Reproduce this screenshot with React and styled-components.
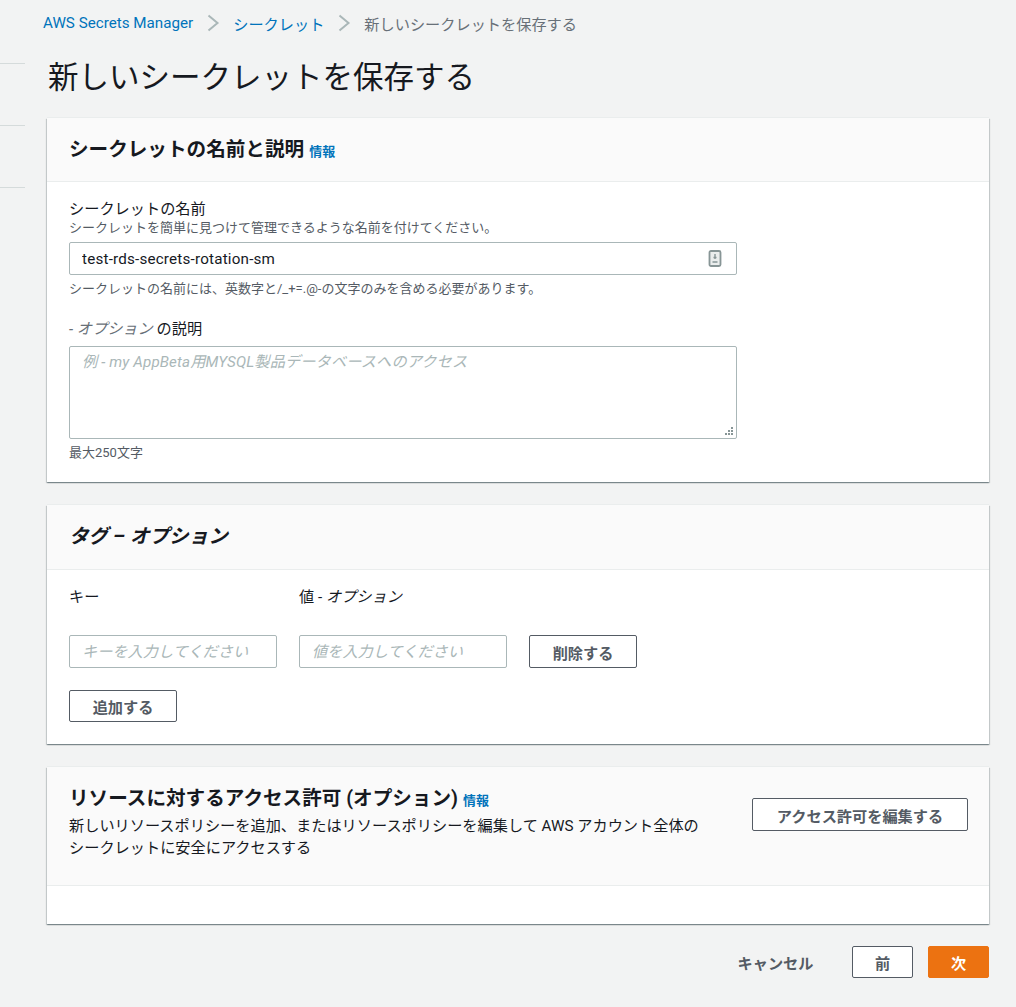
import React from 'react';
import styled, { createGlobalStyle } from 'styled-components';

const FONT = 'Roboto, "Noto Sans CJK JP", sans-serif';

const GlobalStyle = createGlobalStyle`
  html, body {
    margin: 0;
    padding: 0;
    background: #f2f3f3;
  }
  body {
    font-family: ${FONT};
    color: #16191f;
  }
  * {
    box-sizing: border-box;
  }
`;

const Page = styled.div`
  display: flex;
  height: 1007px;
  overflow: hidden;
`;

const SideNav = styled.div`
  width: 25px;
  flex: none;
  padding-top: 63px;
`;

const SideDivider = styled.div`
  height: 62px;
  border-top: 1px solid #d5dbdb;
`;

const Main = styled.div`
  width: 946px;
  margin-left: 18px;
`;

const Breadcrumbs = styled.nav`
  display: flex;
  align-items: center;
  height: 20px;
  margin-top: 13px;
  font-size: 15.2px;
`;

const CrumbLink = styled.a`
  color: #0073bb;
`;

const CrumbCurrent = styled.span`
  color: #687078;
`;

const CrumbArrow = styled.svg`
  width: 14px;
  height: 18px;
  margin: 0 13px;
  fill: none;
  stroke: #aab7b8;
  stroke-width: 2;
`;

const Content = styled.div`
  padding-left: 4px;
`;

const Title = styled.h1`
  margin: 24px 0 20px 1px;
  font-size: 30.5px;
  line-height: 41px;
  font-weight: 400;
`;

const Card = styled.section`
  background: #fff;
  box-shadow: 0 -1px 0 0 #eaeded, 0 1px 1px 0 rgba(0, 28, 36, 0.3), 1px 1px 1px 0 rgba(0, 28, 36, 0.15), -1px 1px 1px 0 rgba(0, 28, 36, 0.15);
  margin-bottom: ${(p) => p.$gap}px;
`;

const CardHeader = styled.header`
  display: flex;
  justify-content: space-between;
  height: ${(p) => p.$height}px;
  padding: ${(p) => p.$top}px 21px 0 22px;
  background: #fafafa;
  border-bottom: 1px solid #eaeded;
`;

const CardTitle = styled.h2`
  margin: 0;
  font-size: 19.6px;
  line-height: 26px;
  font-weight: 700;
`;

const InfoLink = styled.a`
  margin-left: 5px;
  font-size: 13px;
  font-weight: 700;
  color: #0073bb;
`;

const CardBody = styled.div`
  padding: ${(p) => p.$padding};
  height: ${(p) => p.$height}px;
`;

const FieldLabel = styled.label`
  display: block;
  font-size: 15.2px;
  line-height: 20px;
  color: #16191f;
`;

const FaintItalic = styled.i`
  color: #687078;
`;

const Hint = styled.div`
  font-size: 13px;
  line-height: 17px;
  color: #545b64;
  margin-top: ${(p) => p.$top || 0}px;
`;

const InputWrap = styled.div`
  position: relative;
  width: 668px;
  margin-top: ${(p) => p.$top}px;
`;

const TextInput = styled.input`
  display: block;
  width: ${(p) => p.$width}px;
  height: 33px;
  padding: 0 12px;
  border: 1px solid #aab7b8;
  border-radius: 2px;
  background: #fff;
  font-family: ${FONT};
  font-size: 15.2px;
  color: #16191f;
  outline: none;

  &::placeholder {
    color: #aab7b8;
    font-style: italic;
  }
`;

const NameInput = styled(TextInput)`
  letter-spacing: 0.2px;
`;

const KeyIcon = styled.svg`
  position: absolute;
  right: 15px;
  top: 8px;
  width: 14px;
  height: 17px;
`;

const ResizeGrip = styled.svg`
  position: absolute;
  right: 3px;
  bottom: 3px;
  width: 9px;
  height: 9px;
  fill: #879596;
`;

const TextArea = styled.textarea`
  display: block;
  width: 668px;
  height: 93px;
  padding: 4px 12px;
  border: 1px solid #aab7b8;
  border-radius: 2px;
  font-family: ${FONT};
  font-size: 15.2px;
  line-height: 22px;
  letter-spacing: 0.13px;
  outline: none;
  resize: none;

  &::placeholder {
    color: #aab7b8;
    font-style: italic;
  }
`;

const OptionLabel = styled(FieldLabel)`
  margin-top: 22px;
`;

const TagColumns = styled.div`
  display: flex;
  gap: 22px;
`;

const TagLabel = styled(FieldLabel)`
  width: 208px;
`;

const TagRow = styled.div`
  display: flex;
  gap: 22px;
  margin-top: 28px;
`;

const Button = styled.button`
  width: ${(p) => p.$width}px;
  height: ${(p) => p.$height || 33}px;
  padding: 0;
  border: 1px solid #545b64;
  border-radius: 2px;
  background: #fff;
  font-family: ${FONT};
  font-size: 15.2px;
  font-weight: 700;
  color: #545b64;
`;

const AddButton = styled(Button)`
  display: block;
  margin-top: 22px;
`;

const PrimaryButton = styled(Button)`
  border-color: #ec7211;
  background: #ec7211;
  color: #fff;
`;

const CancelButton = styled(Button)`
  border: none;
  background: transparent;
`;

const HeaderText = styled.div`
  width: 640px;
`;

const HeaderDescription = styled.p`
  margin: 1px 0 0;
  font-size: 15.2px;
  line-height: 22px;
  color: #16191f;
`;

const HeaderAction = styled.div`
  padding-top: 12px;
`;

const Footer = styled.footer`
  display: flex;
  justify-content: flex-end;
  align-items: center;
  gap: 15px;
`;

const BackButton = styled(Button)`
  margin-left: 23px;
`;

const Arrow = () => (
  <CrumbArrow viewBox="0 0 14 18">
    <path d="M2.5 1.5l9 7.5-9 7.5" />
  </CrumbArrow>
);

export default function App() {
  return (
    <>
      <GlobalStyle />
      <Page>
        <SideNav>
          <SideDivider />
          <SideDivider />
          <SideDivider />
        </SideNav>
        <Main>
          <Breadcrumbs>
            <CrumbLink>AWS Secrets Manager</CrumbLink>
            <Arrow />
            <CrumbLink>シークレット</CrumbLink>
            <Arrow />
            <CrumbCurrent>新しいシークレットを保存する</CrumbCurrent>
          </Breadcrumbs>
          <Content>
            <Title>新しいシークレットを保存する</Title>

            <Card $gap={23}>
              <CardHeader $height={64} $top={19}>
                <CardTitle>
                  シークレットの名前と説明<InfoLink>情報</InfoLink>
                </CardTitle>
              </CardHeader>
              <CardBody $padding="17px 22px 0" $height={300}>
                <FieldLabel>シークレットの名前</FieldLabel>
                <Hint>シークレットを簡単に見つけて管理できるような名前を付けてください。</Hint>
                <InputWrap $top={6}>
                  <NameInput $width={668} readOnly value="test-rds-secrets-rotation-sm" />
                  <KeyIcon viewBox="0 0 14 17">
                    <rect x="1.5" y="1" width="11" height="15" rx="1.5" fill="#eaeded" stroke="#879596" strokeWidth="1.8" />
                    <path d="M7 4v5M5.5 7.5h3M4.5 12h5" stroke="#879596" strokeWidth="1.4" fill="none" />
                  </KeyIcon>
                </InputWrap>
                <Hint $top={5}>シークレットの名前には、英数字と/_+=.@-の文字のみを含める必要があります。</Hint>
                <OptionLabel>
                  <FaintItalic>- オプション</FaintItalic> の説明
                </OptionLabel>
                <InputWrap $top={7}>
                  <TextArea readOnly placeholder="例 - my AppBeta用MYSQL製品データベースへのアクセス" />
                  <ResizeGrip viewBox="0 0 9 9">
                    <rect x="6" y="0" width="2" height="2" />
                    <rect x="3" y="3" width="2" height="2" />
                    <rect x="6" y="3" width="2" height="2" />
                    <rect x="0" y="6" width="2" height="2" />
                    <rect x="3" y="6" width="2" height="2" />
                    <rect x="6" y="6" width="2" height="2" />
                  </ResizeGrip>
                </InputWrap>
                <Hint $top={5}>最大250文字</Hint>
              </CardBody>
            </Card>

            <Card $gap={23}>
              <CardHeader $height={65} $top={19}>
                <CardTitle>
                  <i>タグ – オプション</i>
                </CardTitle>
              </CardHeader>
              <CardBody $padding="17px 22px 0" $height={174}>
                <TagColumns>
                  <TagLabel>キー</TagLabel>
                  <TagLabel>
                    値 - <i>オプション</i>
                  </TagLabel>
                </TagColumns>
                <TagRow>
                  <TextInput $width={208} readOnly placeholder="キーを入力してください" />
                  <TextInput $width={208} readOnly placeholder="値を入力してください" />
                  <Button $width={108}>削除する</Button>
                </TagRow>
                <AddButton $width={108} $height={32}>追加する</AddButton>
              </CardBody>
            </Card>

            <Card $gap={22}>
              <CardHeader $height={119} $top={19}>
                <HeaderText>
                  <CardTitle>
                    リソースに対するアクセス許可 (オプション)<InfoLink>情報</InfoLink>
                  </CardTitle>
                  <HeaderDescription>
                    新しいリソースポリシーを追加、またはリソースポリシーを編集して AWS アカウント全体のシークレットに安全にアクセスする
                  </HeaderDescription>
                </HeaderText>
                <HeaderAction>
                  <Button $width={216}>アクセス許可を編集する</Button>
                </HeaderAction>
              </CardHeader>
              <CardBody $padding="0" $height={38} />
            </Card>

            <Footer>
              <CancelButton $width={77} $height={32}>キャンセル</CancelButton>
              <BackButton $width={61} $height={32}>前</BackButton>
              <PrimaryButton $width={61} $height={32}>次</PrimaryButton>
            </Footer>
          </Content>
        </Main>
      </Page>
    </>
  );
}
